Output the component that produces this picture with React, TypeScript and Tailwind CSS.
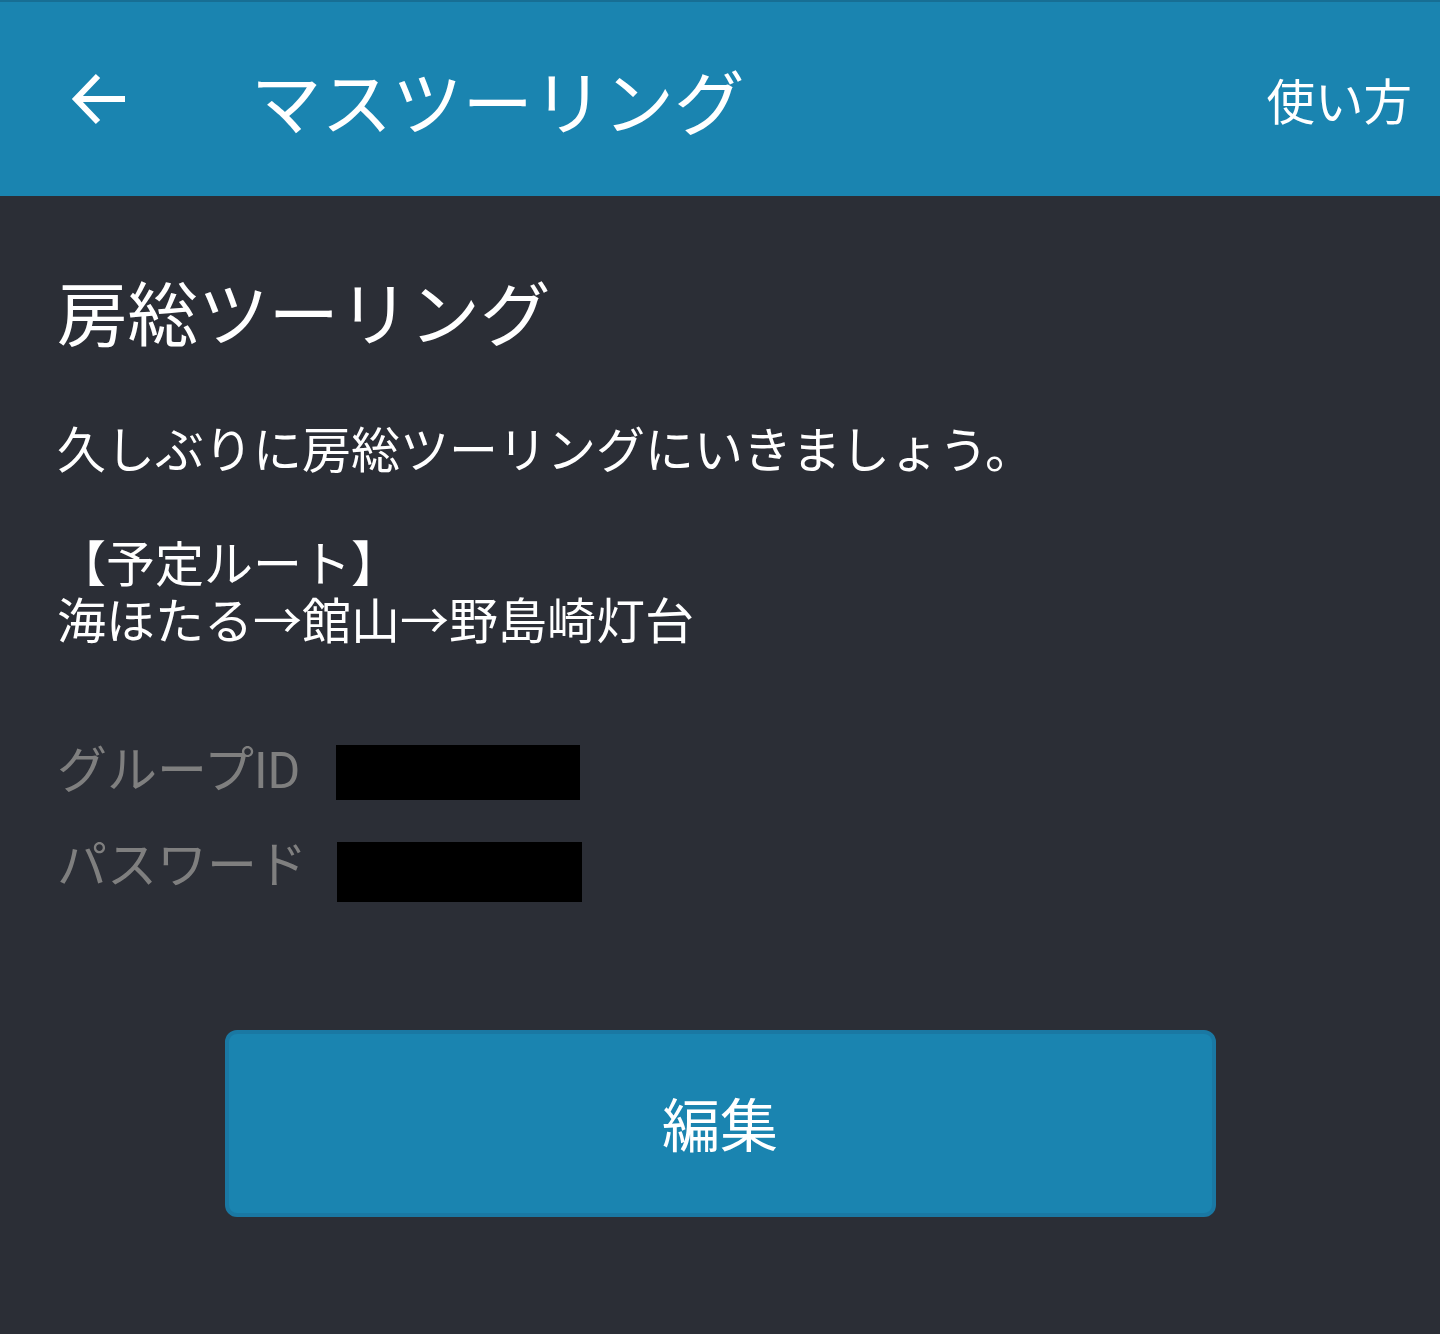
import React from "react";

const cjk = "font-['Noto_Sans_CJK_JP',sans-serif]";

export default function App() {
  return (
    <div className={`min-h-screen w-full bg-[#2b2e36] ${cjk}`}>
      <header className="h-[196px] bg-[#1a84b0] border-t-2 border-[#176e94] flex items-center">
        <div className="ml-[70px] w-[56px] h-[56px] flex items-center justify-center">
          <svg width="56" height="56" viewBox="0 0 56 56" fill="none">
            <path d="M5 28 H55" stroke="white" strokeWidth="6" />
            <path d="M28 5 L6 28 L28 51" stroke="white" strokeWidth="6" />
          </svg>
        </div>
        <h1 className="ml-[125px] text-[70.5px] leading-none text-white">マスツーリング</h1>
        <div className="ml-auto mr-[28px] text-[48.5px] leading-none text-white">使い方</div>
      </header>

      <main className="pl-[57px] pt-[73px]">
        <h2 className="text-[70.5px] leading-[82px] text-white">房総ツーリング</h2>
        <p className="mt-[67px] text-[49px] leading-[57px] text-white whitespace-pre-wrap">
          {"久しぶりに房総ツーリングにいきましょう。\n\n【予定ルート】\n海ほたる→館山→野島崎灯台"}
        </p>

        <div className="mt-[99px] flex flex-col gap-[42px]">
          <div className="flex items-start h-[55px]">
            <div className="w-[279px] mt-[-4px] text-[50px] leading-none text-[#7f7f7f]">
              グループ<span className="font-['Roboto',sans-serif]">ID</span>
            </div>
            <div className="w-[244px] h-[55px] bg-black" />
          </div>
          <div className="flex items-start h-[60px]">
            <div className="w-[280px] mt-[-6px] text-[50px] leading-none text-[#7f7f7f]">パスワード</div>
            <div className="w-[245px] h-[60px] bg-black" />
          </div>
        </div>
      </main>

      <div className="mt-[128px] flex justify-center">
        <button className="w-[991px] h-[187px] rounded-[12px] bg-[#1a84b0] border-4 border-[#1a78a3] text-white text-[58px] leading-none flex items-center justify-center pb-[4px]">
          編集
        </button>
      </div>
    </div>
  );
}
